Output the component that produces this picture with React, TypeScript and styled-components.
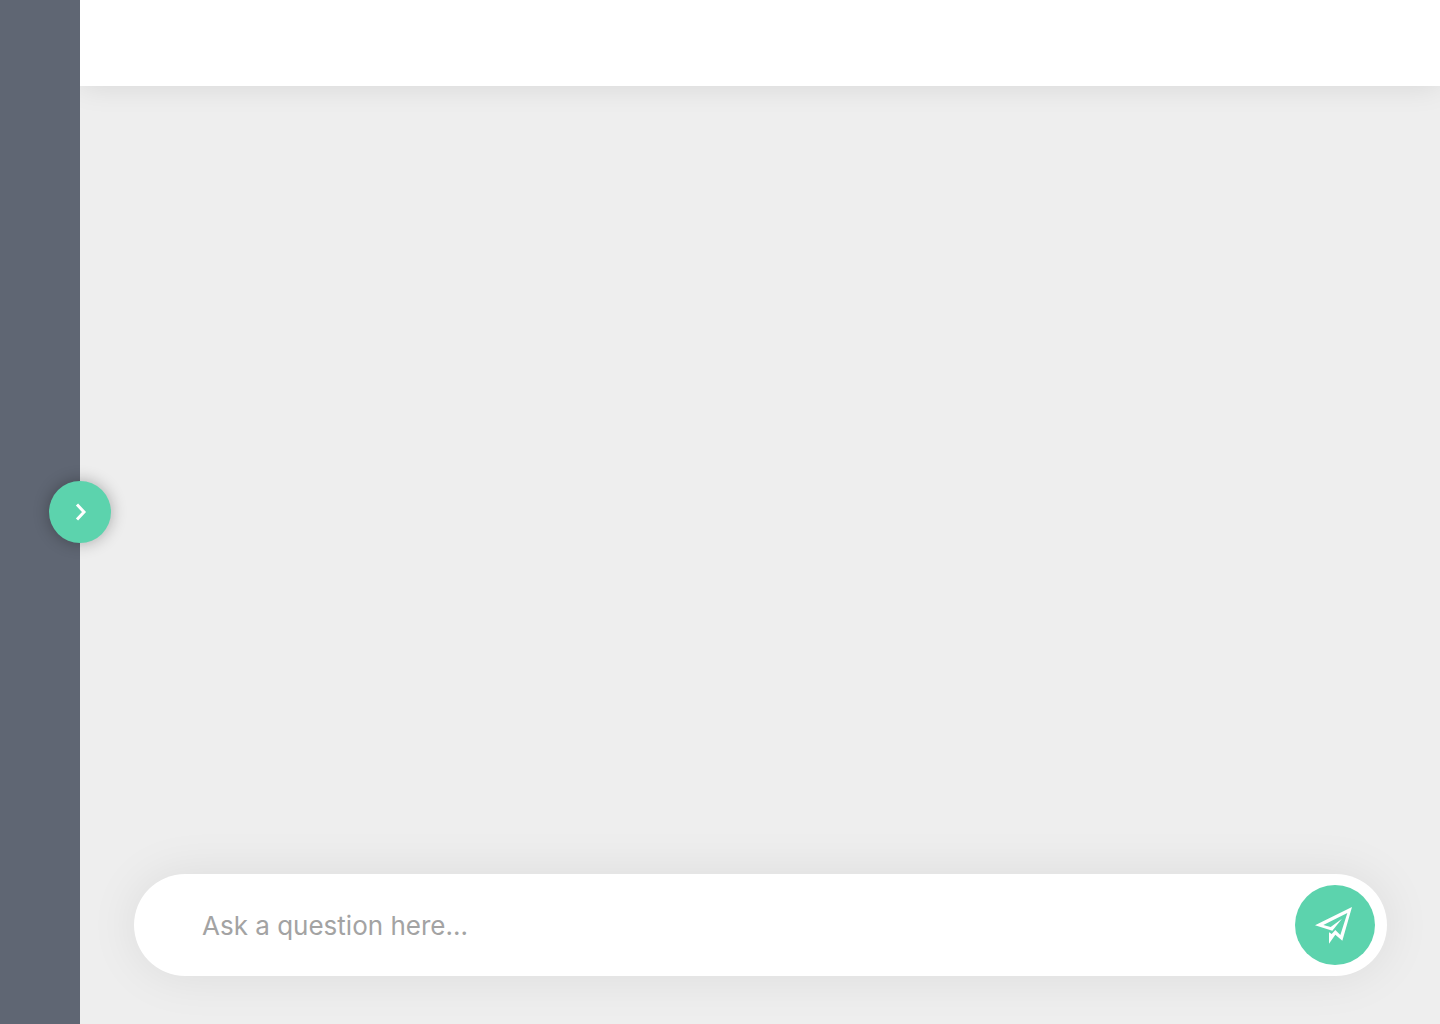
import React, { useState } from "react";
import styled, { createGlobalStyle } from "styled-components";

const GlobalStyle = createGlobalStyle`
  *, *::before, *::after { box-sizing: border-box; }
  body { margin: 0; font-family: Inter, "Liberation Sans", sans-serif; }
`;

const Page = styled.div`
  display: flex;
  min-height: 100vh;
  background: #eeeeee;
`;

const Sidebar = styled.aside`
  position: relative;
  flex: 0 0 80px;
  background: #5f6673;
`;

const RoundButton = styled.button<{ $size: number }>`
  display: flex;
  flex: none;
  align-items: center;
  justify-content: center;
  width: ${({ $size }) => $size}px;
  height: ${({ $size }) => $size}px;
  padding: 0;
  border: 0;
  border-radius: 50%;
  background: #5cd3ad;
  color: #fff;
  cursor: pointer;
`;

const SidebarToggle = styled(RoundButton)`
  position: absolute;
  z-index: 1;
  top: 50%;
  left: 100%;
  transform: translate(-50%, -50%);
  box-shadow: 0 0 16px rgba(0, 0, 0, 0.3);
`;

const Main = styled.main`
  display: flex;
  flex: 1;
  flex-direction: column;
  min-width: 0;
`;

const Header = styled.header`
  height: 86px;
  background: #fff;
  box-shadow: 0 0 30px rgba(0, 0, 0, 0.1);
`;

const Conversation = styled.section`
  flex: 1;
`;

const QuestionForm = styled.form`
  display: flex;
  align-items: center;
  height: 102px;
  margin: 0 53px 48px 54px;
  padding: 0 12px 0 68px;
  border-radius: 51px;
  background: #fff;
  box-shadow: 0 0 50px rgba(0, 0, 0, 0.08);
`;

const QuestionInput = styled.input`
  flex: 1;
  min-width: 0;
  height: 80px;
  padding: 0;
  border: 0;
  outline: 0;
  background: transparent;
  color: #5f6673;
  font-family: inherit;
  font-size: 26px;

  &::placeholder {
    color: #a3a3a3;
    opacity: 1;
  }
`;

function ChevronIcon() {
  return (
    <svg width="30" height="30" viewBox="0 0 30 30" fill="none" aria-hidden="true">
      <path d="M12 7.5 L19 15 L12 22.5" stroke="currentColor" strokeWidth="3" />
    </svg>
  );
}

function PaperPlaneIcon() {
  return (
    <svg width="46" height="46" viewBox="6 0 138 138" fill="currentColor" aria-hidden="true">
      <path d="M15 70 L126 15 L97 116 L76 98 L57 125 L57 91 L65 96 L76 84 L91 99 L112 33 L40 69 L62 75 L96 50 L67 86 Z" />
    </svg>
  );
}

export default function App() {
  const [question, setQuestion] = useState("");
  const [expanded, setExpanded] = useState(false);

  return (
    <>
      <GlobalStyle />
      <Page>
        <Sidebar>
          <SidebarToggle
            $size={62}
            type="button"
            aria-label="Toggle sidebar"
            aria-expanded={expanded}
            onClick={() => setExpanded(!expanded)}
          >
            <ChevronIcon />
          </SidebarToggle>
        </Sidebar>
        <Main>
          <Header />
          <Conversation aria-label="Conversation" />
          <QuestionForm onSubmit={(event) => event.preventDefault()}>
            <QuestionInput
              type="text"
              aria-label="Question"
              placeholder="Ask a question here..."
              value={question}
              onChange={(event) => setQuestion(event.target.value)}
            />
            <RoundButton $size={80} type="submit" aria-label="Send question">
              <PaperPlaneIcon />
            </RoundButton>
          </QuestionForm>
        </Main>
      </Page>
    </>
  );
}
